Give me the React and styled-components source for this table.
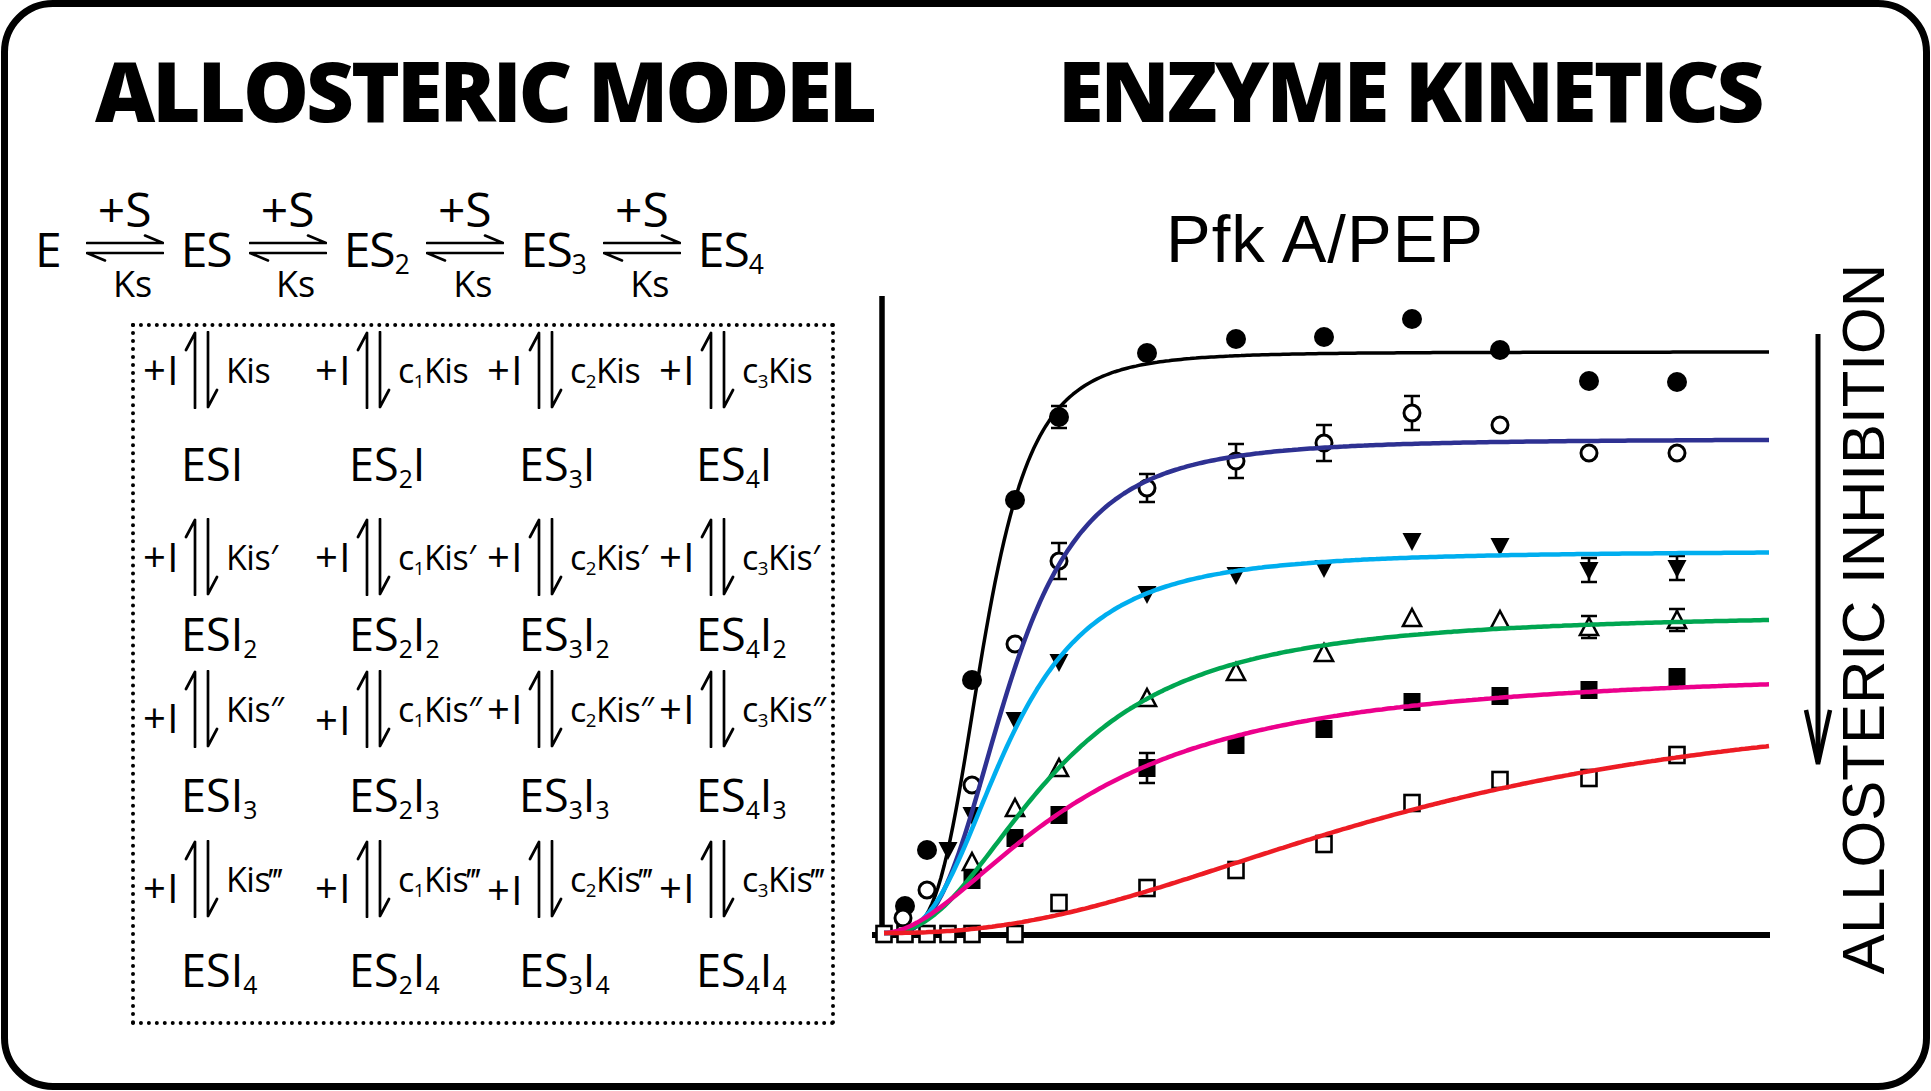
import React from "react";
import styled, { createGlobalStyle } from "styled-components";

const GlobalStyle = createGlobalStyle`
  html, body {
    margin: 0;
    padding: 0;
    background: #fff;
    overflow: hidden;
  }
  body {
    font-family: "Open Sans", "Liberation Sans", sans-serif;
    color: #000;
  }
`;

// ---- plot data (drawn in page pixels through the viewBox) ----
const X0 = 884;
const Y0 = 933;

const CURVES = [
  { color: "#000000", v: 581, k: 100, n: 4, w: 3.5 },
  { color: "#2e3192", v: 494, k: 125, n: 3.2, w: 4.5 },
  { color: "#00aeef", v: 382, k: 125, n: 2.8, w: 4.5 },
  { color: "#00a651", v: 320, k: 170, n: 2.3, w: 4.5 },
  { color: "#ec008c", v: 265, k: 195, n: 1.8, w: 4.5 },
  { color: "#ed1c24", v: 242, k: 520, n: 2.3, w: 4.5 },
];

const hillPath = ({ v, k, n }) => {
  const pts = [];
  for (let u = 0; u <= 886; u += 3) {
    const y = Y0 - (v * Math.pow(u, n)) / (Math.pow(k, n) + Math.pow(u, n));
    pts.push(`${(X0 + u).toFixed(1)},${y.toFixed(1)}`);
  }
  return "M" + pts.join("L");
};

const SERIES = {
  filledCircle: [
    [905, 906], [927, 850], [972, 680], [1015, 500], [1059, 417], [1147, 353],
    [1236, 339], [1324, 337], [1412, 319], [1500, 350], [1589, 381], [1677, 382],
  ],
  openCircle: [
    [903, 918], [927, 890], [972, 785], [1015, 644], [1059, 561], [1147, 488],
    [1236, 461], [1324, 443], [1412, 413], [1500, 425], [1589, 453], [1677, 453],
  ],
  downTriangle: [
    [948, 850], [972, 815], [1015, 720], [1059, 662], [1147, 594], [1236, 575],
    [1324, 568], [1412, 541], [1500, 546], [1589, 570], [1677, 568],
  ],
  upTriangle: [
    [972, 862], [1015, 808], [1059, 768], [1147, 698], [1236, 672], [1324, 653],
    [1412, 618], [1500, 620], [1589, 627], [1677, 620],
  ],
  filledSquare: [
    [972, 880], [1015, 838], [1059, 815], [1147, 768], [1236, 745], [1324, 729],
    [1412, 702], [1500, 696], [1589, 690], [1677, 677],
  ],
  openSquare: [
    [884, 934], [905, 934], [927, 934], [948, 934], [972, 934], [1015, 934],
    [1059, 903], [1147, 888], [1236, 870], [1324, 844], [1412, 803], [1500, 780],
    [1589, 778], [1677, 755],
  ],
};

const ERROR_BARS = [
  [1059, 417, 11], [1059, 561, 18], [1147, 488, 14], [1236, 461, 17],
  [1324, 443, 18], [1412, 413, 17], [1589, 570, 12], [1677, 568, 12],
  [1589, 627, 11], [1677, 620, 11], [1147, 768, 15],
];

const Marker = ({ kind, x, y }) => {
  switch (kind) {
    case "filledCircle":
      return <circle cx={x} cy={y} r="10" fill="#000" />;
    case "openCircle":
      return <circle cx={x} cy={y} r="8" fill="#fff" stroke="#000" strokeWidth="3" />;
    case "downTriangle":
      return <polygon points={`${x - 9.5},${y - 8} ${x + 9.5},${y - 8} ${x},${y + 10}`} fill="#000" />;
    case "upTriangle":
      return (
        <polygon
          points={`${x},${y - 9} ${x + 9},${y + 8} ${x - 9},${y + 8}`}
          fill="#fff"
          stroke="#000"
          strokeWidth="2.6"
        />
      );
    case "filledSquare":
      return <rect x={x - 8.5} y={y - 9} width="17" height="18" fill="#000" />;
    default:
      return (
        <rect x={x - 7.5} y={y - 8} width="15" height="16" fill="#fff" stroke="#000" strokeWidth="2.6" />
      );
  }
};

// ---- scheme data ----
const PRIMES = ["", "\u2032", "\u2033", "\u2034"];
const PLUS_DROP = [
  [0, 0, 0, 0],
  [0, 0, 0, 0],
  [18, 22, 0, 0],
  [17, 17, 21, 17],
];
const COMPLEX_INDENT = [38, 34, 32, 37];

// ---- layout ----
const Frame = styled.div`
  box-sizing: border-box;
  width: 1929px;
  height: 1090px;
  margin-left: 1px;
  border: 7px solid #000;
  border-radius: 52px;
  display: grid;
  grid-template-columns: 852px 1fr;
  align-items: start;
  overflow: hidden;
`;

const Column = styled.section`
  display: flex;
  flex-direction: column;
  align-items: flex-start;
`;

const Heading = styled.h1`
  margin: 0;
  padding: 41px 0 0 ${(p) => p.$indent}px;
  font-family: "Open Sans", "Liberation Sans", sans-serif;
  font-weight: 800;
  font-size: 83px;
  line-height: 83px;
  letter-spacing: -3px;
  white-space: nowrap;
`;

const Sub = styled.sub`
  font-size: 0.55em;
  line-height: 0;
  vertical-align: -0.28em;
`;

const Equation = styled.div`
  display: flex;
  align-items: flex-start;
  gap: 17px;
  margin: 58px 0 0 27px;
`;

const Species = styled.span`
  margin: 36px ${(p) => (p.$lead ? 8 : 0)}px 0 0;
  font-size: 48px;
  line-height: 48px;
  letter-spacing: -1px;
  white-space: nowrap;
`;

const Step = styled.div`
  display: flex;
  flex-direction: column;
  align-items: center;
  width: 78px;
`;

const StepTop = styled.span`
  font-size: 48px;
  line-height: 40px;
  white-space: nowrap;
`;

const StepBottom = styled.span`
  margin-top: 4px;
  padding-left: 16px;
  font-size: 36px;
  line-height: 36px;
  white-space: nowrap;
`;

const EqSvg = styled.svg`
  display: block;
  margin-top: 5px;
`;

const SchemeBox = styled.div`
  box-sizing: border-box;
  width: 704px;
  height: 702px;
  margin: 21px 0 0 123px;
  border: 4px dotted #000;
  padding: 4px 0 0 8px;
  display: grid;
  grid-template-columns: repeat(4, 172px);
  grid-template-rows: 78px 109px 78px 74px 78px 92px 78px 1fr;
`;

const Binding = styled.div`
  display: flex;
  align-items: center;
  height: 78px;
`;

const PlusI = styled.span`
  margin-top: ${(p) => p.$drop}px;
  font-size: 40px;
  line-height: 40px;
  letter-spacing: 1.5px;
  white-space: nowrap;
`;

const HarpoonSvg = styled.svg`
  display: block;
  flex: none;
  margin: 0 6px 0 4px;
`;

const Constant = styled.span`
  font-size: 34px;
  line-height: 34px;
  letter-spacing: -0.5px;
  white-space: nowrap;
`;

const Complex = styled.div`
  display: flex;
  align-items: center;
  padding-left: ${(p) => p.$indent}px;
  font-size: 45px;
  line-height: 45px;
  white-space: nowrap;
`;

const ChartRow = styled.div`
  display: flex;
  align-items: flex-start;
`;

const ChartArea = styled.div`
  width: 930px;
  margin-top: 74px;
  display: flex;
  flex-direction: column;
  align-items: center;
`;

const PlotTitle = styled.div`
  font-family: "Liberation Sans", Arial, sans-serif;
  font-size: 67px;
  line-height: 67px;
  letter-spacing: 1px;
  white-space: nowrap;
`;

const Plot = styled.svg`
  display: block;
  margin-top: 13px;
`;

const TrendArrow = styled.svg`
  display: block;
  flex: none;
  margin: 199px 0 0 8px;
`;

const SideLabel = styled.div`
  margin: 133px 0 0 -4px;
  writing-mode: vertical-rl;
  transform: rotate(180deg);
  font-family: "Liberation Sans", Arial, sans-serif;
  font-size: 60px;
  line-height: 60px;
  white-space: nowrap;
`;

// ---- pieces ----
const Equilibrium = () => (
  <EqSvg width="78" height="28" viewBox="0 0 78 28">
    <path
      d="M1 9H77M77 9L59 1.5M1 19H77M1 19L19 26.5"
      fill="none"
      stroke="#000"
      strokeWidth="2.6"
      strokeLinecap="round"
    />
  </EqSvg>
);

const Harpoons = () => (
  <HarpoonSvg width="36" height="78" viewBox="0 0 36 78">
    <path
      d="M11 77V2M11 2L2 19M24 1V76M24 76L33 59"
      fill="none"
      stroke="#000"
      strokeWidth="2.7"
      strokeLinecap="round"
    />
  </HarpoonSvg>
);

const Reaction = () => {
  const products = [
    <>E</>,
    <>ES</>,
    <>ES<Sub>2</Sub></>,
    <>ES<Sub>3</Sub></>,
    <>ES<Sub>4</Sub></>,
  ];
  return (
    <Equation>
      {products.map((p, i) => (
        <React.Fragment key={i}>
          {i > 0 && (
            <Step>
              <StepTop>+S</StepTop>
              <Equilibrium />
              <StepBottom>Ks</StepBottom>
            </Step>
          )}
          <Species $lead={i === 0}>{p}</Species>
        </React.Fragment>
      ))}
    </Equation>
  );
};

const Scheme = () => (
  <SchemeBox>
    {[0, 1, 2, 3].map((row) => (
      <React.Fragment key={row}>
        {[0, 1, 2, 3].map((col) => (
          <Binding key={`b${col}`}>
            <PlusI $drop={PLUS_DROP[row][col]}>+I</PlusI>
            <Harpoons />
            <Constant>
              {col > 0 && (
                <>
                  c<Sub>{col}</Sub>
                </>
              )}
              Kis{PRIMES[row]}
            </Constant>
          </Binding>
        ))}
        {[0, 1, 2, 3].map((col) => (
          <Complex key={`c${col}`} $indent={COMPLEX_INDENT[col]}>
            <span>
              ES{col > 0 && <Sub>{col + 1}</Sub>}I{row > 0 && <Sub>{row + 1}</Sub>}
            </span>
          </Complex>
        ))}
      </React.Fragment>
    ))}
  </SchemeBox>
);

const KineticsPlot = () => (
  <Plot width="930" height="670" viewBox="860 285 930 670">
    <line x1="882" y1="296" x2="882" y2="938" stroke="#000" strokeWidth="5.5" />
    <line x1="872" y1="935" x2="1770" y2="935" stroke="#000" strokeWidth="6" />
    {ERROR_BARS.map(([x, y, e], i) => (
      <path
        key={i}
        d={`M${x} ${y - e}V${y + e}M${x - 8} ${y - e}H${x + 8}M${x - 8} ${y + e}H${x + 8}`}
        stroke="#000"
        strokeWidth="2.6"
        fill="none"
      />
    ))}
    {Object.entries(SERIES).map(([kind, pts]) =>
      pts.map(([x, y], i) => <Marker key={`${kind}${i}`} kind={kind} x={x} y={y} />)
    )}
    {CURVES.map((c) => (
      <path
        key={c.color}
        d={hillPath(c)}
        fill="none"
        stroke={c.color}
        strokeWidth={c.w}
        strokeLinejoin="round"
      />
    ))}
  </Plot>
);

export default function App() {
  return (
    <>
      <GlobalStyle />
      <Frame>
        <Column>
          <Heading $indent={87}>ALLOSTERIC MODEL</Heading>
          <Reaction />
          <Scheme />
        </Column>
        <Column>
          <Heading $indent={198}>ENZYME KINETICS</Heading>
          <ChartRow>
            <ChartArea>
              <PlotTitle>Pfk A/PEP</PlotTitle>
              <KineticsPlot />
            </ChartArea>
            <TrendArrow width="40" height="440" viewBox="0 0 40 440">
              <path d="M20 4V432" stroke="#000" strokeWidth="5" fill="none" />
              <path d="M8 380L20 434L32 380" stroke="#000" strokeWidth="4.5" fill="none" />
            </TrendArrow>
            <SideLabel>ALLOSTERIC INHIBITION</SideLabel>
          </ChartRow>
        </Column>
      </Frame>
    </>
  );
}
